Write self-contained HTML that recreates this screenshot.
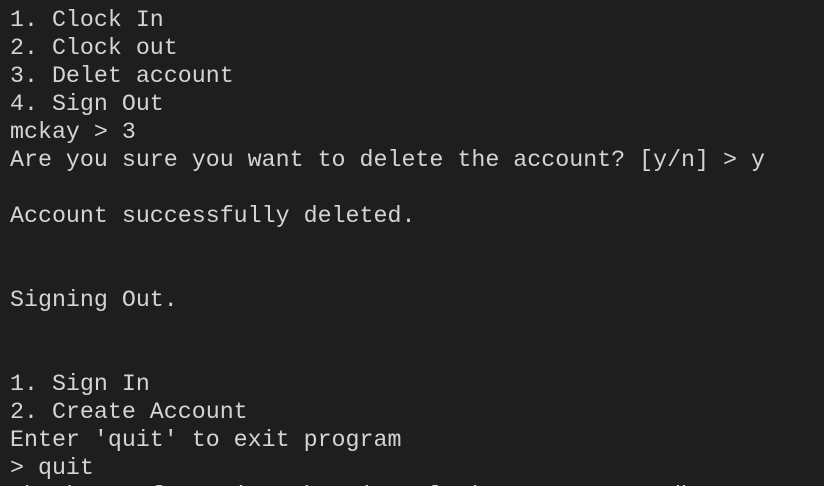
<!DOCTYPE html>
<html><head><style>
html,body{margin:0;padding:0;background:#1e1e1e;width:824px;height:486px;overflow:hidden}
pre{margin:0;padding:6px 0 0 10px;font-family:"Liberation Mono",monospace;font-size:23.3px;line-height:28px;color:#d4d4d4;white-space:pre}
</style></head><body><pre>1. Clock In
2. Clock out
3. Delet account
4. Sign Out
mckay &gt; 3
Are you sure you want to delete the account? [y/n] &gt; y

Account successfully deleted.


Signing Out.


1. Sign In
2. Create Account
Enter 'quit' to exit program
&gt; quit
Thank you for using the time clock program. Goodbye!</pre></body></html>
